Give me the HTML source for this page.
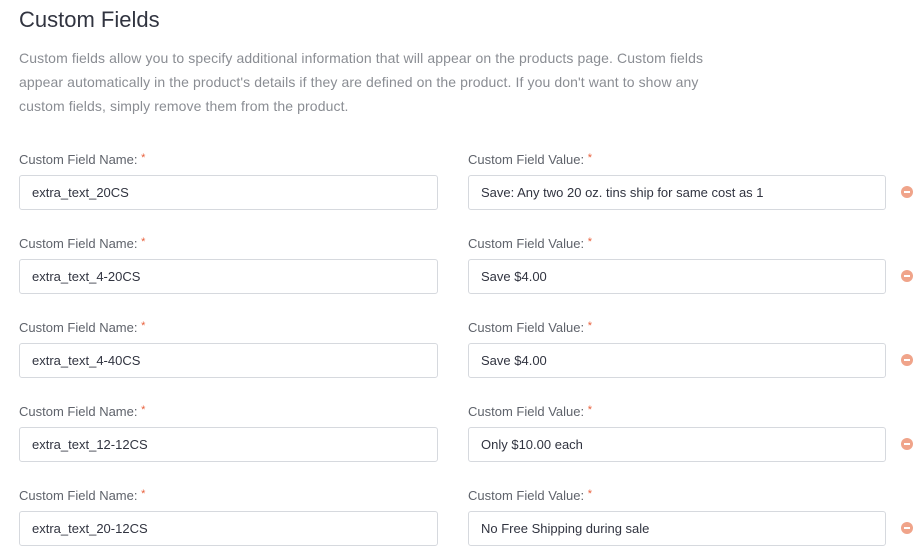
<!DOCTYPE html>
<html><head><style>
body{margin:0;background:#fff;font-family:"Liberation Sans",sans-serif;width:924px;height:552px;overflow:hidden;position:relative}
h1{position:absolute;left:19px;top:7px;margin:0;font-size:22px;font-weight:normal;color:#313440}
.desc{position:absolute;left:19px;top:46px;width:800px;font-size:14px;letter-spacing:0.1px;line-height:24px;color:#8a8d93;white-space:nowrap}
.lbl{position:absolute;font-size:13px;color:#5f636b}
.lbl span{color:#e8603c;font-size:11px;vertical-align:top}
.inp{position:absolute;height:35px;border:1px solid #d6d9de;border-radius:3px;box-sizing:border-box;font-size:13px;color:#313440;padding-left:12px;line-height:33px}
.rm{position:absolute;width:12px;height:12px;border-radius:50%;background:#f0a48a}
.rm:after{content:"";position:absolute;left:3px;top:5px;width:6px;height:2px;background:#fff}
</style></head><body>
<h1>Custom Fields</h1>
<div class="desc">Custom fields allow you to specify additional information that will appear on the products page. Custom fields<br>appear automatically in the product's details if they are defined on the product. If you don't want to show any<br>custom fields, simply remove them from the product.</div>
<div id="rows"></div>
<script>
var d=[["extra_text_20CS","Save: Any two 20 oz. tins ship for same cost as 1"],["extra_text_4-20CS","Save $4.00"],["extra_text_4-40CS","Save $4.00"],["extra_text_12-12CS","Only $10.00 each"],["extra_text_20-12CS","No Free Shipping during sale"]];
var h="";d.forEach(function(r,i){var y=i*84;
h+='<div class="lbl" style="left:19px;top:'+(152+y)+'px">Custom Field Name: <span>*</span></div>';
h+='<div class="lbl" style="left:468px;top:'+(152+y)+'px">Custom Field Value: <span>*</span></div>';
h+='<div class="inp" style="left:19px;width:419px;top:'+(175+y)+'px">'+r[0]+'</div>';
h+='<div class="inp" style="left:468px;width:418px;top:'+(175+y)+'px">'+r[1]+'</div>';
h+='<div class="rm" style="left:901px;top:'+(186+y)+'px"></div>';});
document.getElementById("rows").innerHTML=h;
</script>
</body></html>
